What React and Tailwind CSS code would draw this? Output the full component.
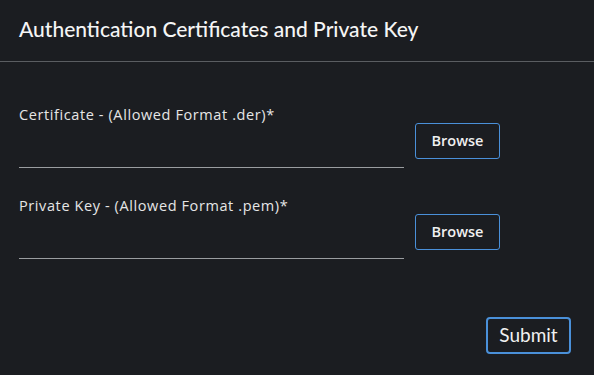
export default function App() {
    return (
        <div className="min-h-[375px] w-[594px] bg-[#1b1d21] text-[#e0e0e0]" style={{ fontFamily: "'Open Sans', 'Noto Sans', sans-serif" }}>
            {/* Header */}
            <div className="h-[62px] border-b border-[#5a5d61] px-[19px] flex items-center">
                <h1 className="text-[21px] font-medium text-[#f5f5f5] -mt-[4px]" style={{ fontFamily: "Lato, sans-serif" }}>
                    Authentication Certificates and Private Key
                </h1>
            </div>

            {/* Form */}
            <div className="px-[19px] pt-[45px] flex flex-col gap-[30px]">
                <FileRow label="Certificate - (Allowed Format .der)*" />
                <FileRow label="Private Key - (Allowed Format .pem)*" />
            </div>

            <div className="flex justify-end pr-[23px] pt-[58px]">
                <button className="w-[85px] h-[37px] rounded-[4px] border-2 border-[#4a90d9] text-[19px] text-[#f0f0f0]" style={{ fontFamily: "Lato, sans-serif" }}>
                    Submit
                </button>
            </div>
        </div>
    )
}

function FileRow({ label }) {
    return (
        <div className="flex items-end gap-[11px]">
            <div className="w-[385px]">
                <label className="block text-[14.5px] leading-[16px] text-[#e6e6e6] tracking-[0.6px]">{label}</label>
                <div className="h-[45px] border-b border-[#9a9da0]"></div>
            </div>
            <button className="mb-[9px] w-[85px] h-[36px] rounded-[3px] border border-[#4a90d9] text-[14.5px] font-semibold text-[#f0f0f0]">
                Browse
            </button>
        </div>
    )
}
